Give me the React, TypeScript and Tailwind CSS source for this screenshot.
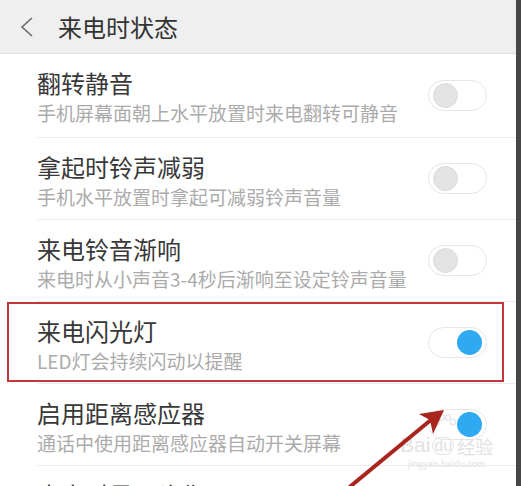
import React from "react";

type Item = {
  title: string;
  desc: string;
  on: boolean;
};

const items: Item[] = [
  { title: "翻转静音", desc: "手机屏幕面朝上水平放置时来电翻转可静音", on: false },
  { title: "拿起时铃声减弱", desc: "手机水平放置时拿起可减弱铃声音量", on: false },
  { title: "来电铃音渐响", desc: "来电时从小声音3-4秒后渐响至设定铃声音量", on: false },
  { title: "来电闪光灯", desc: "LED灯会持续闪动以提醒", on: true },
  { title: "启用距离感应器", desc: "通话中使用距离感应器自动开关屏幕", on: true },
  { title: "来电时显示头像", desc: "", on: false },
];

const Toggle = ({ on }: { on: boolean }) => (
  <div
    className={`flex h-[31px] w-[59px] shrink-0 items-center rounded-full border border-[#e6e6e6] bg-white px-[4px] ${
      on ? "justify-end" : "justify-start"
    }`}
  >
    <div
      className={`h-[25px] w-[25px] rounded-full ${
        on ? "bg-[#2fa9f1]" : "bg-[#e4e4e4] border border-[#dcdcdc]"
      }`}
    />
  </div>
);

const Row = ({ item, first }: { item: Item; first?: boolean }) => (
  <div
    className={`flex shrink-0 items-start justify-between border-b border-[#ececec] pr-[29px] ${
      first ? "h-[84px]" : "h-[82px]"
    }`}
  >
    <div className="flex flex-col pt-[14px]">
      <div className="text-[24px] leading-[30px] text-[#383838]">{item.title}</div>
      {item.desc && (
        <div className="text-[19px] leading-[30px] text-[#ababab]">{item.desc}</div>
      )}
    </div>
    <div className="flex h-full items-center">
      <Toggle on={item.on} />
    </div>
  </div>
);

export default function App() {
  return (
    <div
      className="relative flex h-[486px] w-[521px] overflow-hidden bg-white"
      style={{ fontFamily: '"Noto Sans CJK SC", "Noto Sans", sans-serif' }}
    >
      <div className="flex flex-1 flex-col">
        {/* header */}
        <div className="flex h-[54px] shrink-0 items-center border-b border-[#dedede] bg-[#efefef]">
          <svg width="16" height="22" viewBox="0 0 16 22" className="ml-[18px]">
            <path d="M14 2 L4 11 L14 20" fill="none" stroke="#6a6a6a" strokeWidth="1.6" />
          </svg>
          <div className="ml-[24px] text-[24px] leading-none text-[#333]">来电时状态</div>
        </div>

        <div className="ml-[37px] flex flex-col">
          {items.map((item, i) => (
            <Row key={i} item={item} first={i === 0} />
          ))}
        </div>
      </div>
      <div className="w-[5px] shrink-0 bg-[#474747]" />

      {/* annotation box */}
      <div className="absolute left-[7px] top-[302px] h-[80px] w-[497px] border-2 border-[#c3363b]" />

      {/* watermark */}
      <svg className="absolute left-[432px] top-[414px]" width="26" height="22" viewBox="0 0 26 22">
        <g fill="none" stroke="#e2e2e2" strokeWidth="1.2">
          <ellipse cx="5" cy="8" rx="2.5" ry="3" />
          <ellipse cx="10" cy="3.5" rx="2.5" ry="3" />
          <ellipse cx="16" cy="3.5" rx="2.5" ry="3" />
          <ellipse cx="21" cy="8" rx="2.5" ry="3" />
        </g>
      </svg>
      <div className="absolute left-[400px] top-[434px] flex flex-col items-center text-[#e2e2e2]">
        <div className="flex items-end text-[21px] leading-none" style={{ fontFamily: '"Liberation Sans", sans-serif' }}>
          <span>Bai</span>
          <span className="ml-[2px] rounded-full border border-[#e2e2e2] px-[1px] text-[16px]">du</span>
          <span className="ml-[3px] text-[18px]" style={{ fontFamily: '"Noto Sans CJK SC", sans-serif' }}>经验</span>
        </div>
        <div className="mt-[4px] text-[9px] leading-none">jingyan.baidu.com</div>
      </div>

      {/* arrow */}
      <svg className="absolute left-0 top-0" width="521" height="486" viewBox="0 0 521 486">
        <line x1="346" y1="490" x2="432" y2="419" stroke="#a8261e" strokeWidth="4" />
        <polygon points="444,410 419,414 430,420 433,434" fill="#a8261e" />
      </svg>
    </div>
  );
}
